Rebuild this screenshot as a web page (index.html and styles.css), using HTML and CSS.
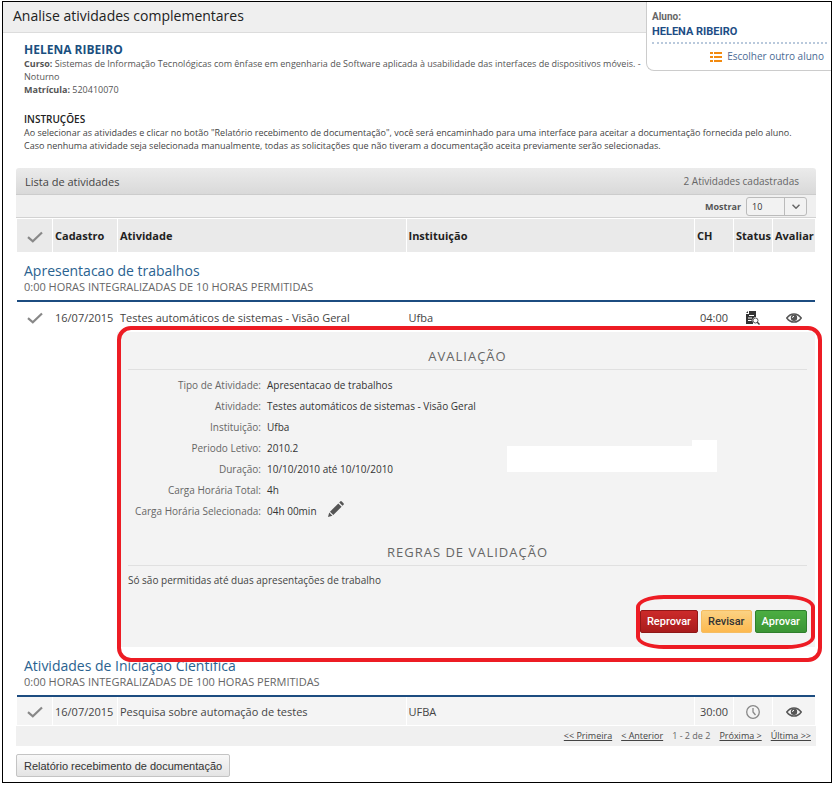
FILE: index.html
```html
<!DOCTYPE html>
<html lang="pt-BR">
<head>
<meta charset="utf-8">
<title>Analise atividades complementares</title>
<link rel="stylesheet" href="styles.css">
</head>
<body>
<svg class="sprite" aria-hidden="true">
  <symbol id="check" viewBox="0 0 16 12"><path d="M1 6.200 5.800 10.300 15 1.500" fill="none" stroke="currentColor" stroke-width="2.200"/></symbol>
  <symbol id="eye" viewBox="0 0 16 10">
    <path d="M.8 5C2.800 2.200 5.200.9 8 .9S13.200 2.200 15.200 5C13.200 7.800 10.800 9.100 8 9.100S2.800 7.800.8 5Z" fill="none" stroke="currentColor" stroke-width="1.500"/>
    <circle cx="8" cy="4.800" r="3.200" fill="currentColor"/>
    <path d="M6.500 4.800A1.500 1.500 0 0 1 8 3.300" fill="none" stroke="#fff"/>
  </symbol>
</svg>
<div class="frame">
  <header class="topbar"><h1>Analise atividades complementares</h1></header>
  <aside class="student">
    <div class="student-label">Aluno:</div>
    <div class="student-name">HELENA RIBEIRO</div>
    <a class="student-switch" href="#">
      <svg width="12" height="10" viewBox="0 0 12 10" fill="#f28a10"><path d="M0 0h3v2H0zM4 0h8v2H4zM0 4h3v2H0zM4 4h8v2H4zM0 8h3v2H0zM4 8h8v2H4z"/></svg>
      Escolher outro aluno</a>
  </aside>

  <main class="content">
    <section class="info">
      <h2>HELENA RIBEIRO</h2>
      <p><b>Curso:</b> Sistemas de Informação Tecnológicas com ênfase em engenharia de Software aplicada à usabilidade das interfaces de dispositivos móveis. - Noturno</p>
      <p><b>Matrícula:</b> 520410070</p>
    </section>
    <section class="instructions">
      <h3>INSTRUÇÕES</h3>
      <p>Ao selecionar as atividades e clicar no botão "Relatório recebimento de documentação", você será encaminhado para uma interface para aceitar a documentação fornecida pelo aluno.</p>
      <p>Caso nenhuma atividade seja selecionada manualmente, todas as solicitações que não tiveram a documentação aceita previamente serão selecionadas.</p>
    </section>

    <section class="list">
      <div class="list-head"><h2>Lista de atividades</h2><span>2 Atividades cadastradas</span></div>
      <div class="list-tools">
        <label for="page-size">Mostrar</label>
        <span class="select">
          <select id="page-size"><option>10</option><option>20</option></select>
          <svg width="8" height="5" viewBox="0 0 8 5"><path d="M.5.7 4 4.200 7.500.7" fill="none" stroke="#666" stroke-width="1.500"/></svg>
        </span>
      </div>
      <table>
        <colgroup><col class="c-check"><col class="c-date"><col><col><col class="c-hours"><col class="c-status"><col class="c-view"></colgroup>
        <thead>
          <tr>
            <th class="mid"><label class="tick"><input type="checkbox" aria-label="Selecionar todas"><svg><use href="#check"/></svg></label></th>
            <th>Cadastro</th><th>Atividade</th><th>Instituição</th><th>CH</th><th>Status</th><th>Avaliar</th>
          </tr>
        </thead>
        <tbody>
          <tr class="group"><td colspan="7"><h3>Apresentacao de trabalhos</h3><p>0:00 HORAS INTEGRALIZADAS DE 10 HORAS PERMITIDAS</p></td></tr>
          <tr class="row">
            <td class="mid"><label class="tick"><input type="checkbox" aria-label="Selecionar Testes automáticos de sistemas"><svg><use href="#check"/></svg></label></td>
            <td>16/07/2015</td><td>Testes automáticos de sistemas - Visão Geral</td><td>Ufba</td><td class="hours">04:00</td>
            <td class="mid"><svg class="doc" viewBox="0 0 14 14"><path fill="#333" fill-rule="evenodd" d="M3 0h7v6a3.500 3.500 0 0 0-3 5.500V13H0V3h3ZM3 4v1h5V4ZM2 6.500v1h4v-1ZM2 9v1h3.500V9ZM0 2 2 0v2Z"/><circle cx="9.500" cy="9.500" r="2.500" fill="#fff" stroke="#555"/><path d="m11.300 11.300 2.200 2.200" stroke="#333" stroke-width="1.300"/></svg></td>
            <td class="mid"><button class="icon" aria-label="Avaliar"><svg class="eye"><use href="#eye"/></svg></button></td>
          </tr>
          <tr class="detail">
            <td colspan="2"></td>
            <td colspan="5">
              <div class="panel">
                <h4>AVALIAÇÃO</h4>
                <dl>
                  <dt>Tipo de Atividade:</dt><dd>Apresentacao de trabalhos</dd>
                  <dt>Atividade:</dt><dd>Testes automáticos de sistemas - Visão Geral</dd>
                  <dt>Instituição:</dt><dd>Ufba</dd>
                  <dt>Periodo Letivo:</dt><dd>2010.2</dd>
                  <dt>Duração:</dt><dd>10/10/2010 até 10/10/2010</dd>
                  <dt>Carga Horária Total:</dt><dd>4h</dd>
                  <dt>Carga Horária Selecionada:</dt><dd>04h 00min <button class="icon edit" aria-label="Editar carga horária"><svg width="16" height="16" viewBox="0 0 16 16" fill="#555"><path d="m0 16 1.200-4.400 3.200 3.200ZM2 10.700 10.300 2.400l3.300 3.300L5.300 14ZM11.200 1.500l1-1q.8-.8 1.600 0l1.700 1.700q.8.8 0 1.600l-1 1Z"/></svg></button></dd>
                </dl>
                <h4>REGRAS DE VALIDAÇÃO</h4>
                <p>Só são permitidas até duas apresentações de trabalho</p>
                <div class="actions">
                  <button class="btn reject">Reprovar</button>
                  <button class="btn revise">Revisar</button>
                  <button class="btn approve">Aprovar</button>
                </div>
                <div class="blank"></div>
                <div class="mark mark-panel"></div>
                <div class="mark mark-actions"></div>
              </div>
            </td>
          </tr>
          <tr class="group"><td colspan="7"><h3>Atividades de Iniciação Científica</h3><p>0:00 HORAS INTEGRALIZADAS DE 100 HORAS PERMITIDAS</p></td></tr>
          <tr class="row shaded">
            <td class="mid"><label class="tick"><input type="checkbox" aria-label="Selecionar Pesquisa sobre automação de testes"><svg><use href="#check"/></svg></label></td>
            <td>16/07/2015</td><td>Pesquisa sobre automação de testes</td><td>UFBA</td><td class="hours">30:00</td>
            <td class="mid"><svg class="doc" viewBox="0 0 14 14" fill="none" stroke="#888" stroke-width="1.300"><circle cx="7" cy="7" r="6.300"/><path d="M7 3v4l2.500 3"/></svg></td>
            <td class="mid"><button class="icon" aria-label="Avaliar"><svg class="eye"><use href="#eye"/></svg></button></td>
          </tr>
        </tbody>
      </table>
      <nav class="pager"><a href="#">&lt;&lt; Primeira</a><a href="#">&lt; Anterior</a><span>1 - 2 de 2</span><a href="#">Próxima &gt;</a><a href="#">Última &gt;&gt;</a></nav>
    </section>
    <button class="report">Relatório recebimento de documentação</button>
  </main>
</div>
</body>
</html>
```

FILE: styles.css
```css
* { box-sizing: border-box; }
body {
  margin: 1px 1px 3px 2px;
  background: #fff;
  color: #444;
  font: 11px/13px "Open Sans", "Noto Sans", sans-serif;
}
h1, h2, h3, h4, p, dl, dd { margin: 0; font-weight: 400; }
svg { display: block; }
button { cursor: pointer; }
.sprite { position: absolute; width: 0; height: 0; }
.frame { position: relative; border: 1px solid #000; }

.topbar {
  height: 31px;
  padding: 0 10px;
  background: #efefef;
  border-bottom: 1px solid #dcdcdc;
}
.topbar h1 { font-size: 14px; line-height: 28px; color: #222; }

.student {
  position: absolute;
  top: 0;
  right: 0;
  width: 185px;
  height: 69px;
  padding: 7px 4px 0 5px;
  background: #fff;
  border: solid #ccc;
  border-width: 0 0 1px 1px;
  border-radius: 0 0 0 8px;
}
.student-label { font: bold 10px/15px Roboto, sans-serif; color: #666; }
.student-name {
  padding-bottom: 2px;
  border-bottom: 2px dotted #b9c9dc;
  font: bold 11px/16px Roboto, sans-serif;
  color: #1d4d85;
}
.student-switch {
  display: flex;
  justify-content: flex-end;
  align-items: center;
  gap: 5px;
  padding: 6px 3px 0 0;
  font-size: 10px;
  color: #4a6a94;
  text-decoration: none;
}

.content { padding: 10px 15px 5px 13px; }
.info, .instructions { padding-left: 8px; }
.info { width: 640px; color: #555; font-size: 9px; }
.info h2 { font-size: 12px; line-height: 14px; font-weight: 700; color: #1a4f80; }
.instructions { padding-top: 17px; font-size: 9px; }
.instructions h3 { font-size: 10px; font-weight: 600; color: #222; }

.list { margin-top: 16px; }
.list-head {
  display: flex;
  justify-content: space-between;
  height: 27px;
  padding: 0 17px 0 9px;
  border-bottom: 1px solid #ccc;
  border-radius: 3px 3px 0 0;
  background: linear-gradient(#ebebeb, #d9d9d9);
  line-height: 27px;
}
.list-head h2 { font-size: 11px; }
.list-head span { font-size: 10px; color: #666; }
.list-tools {
  display: flex;
  justify-content: flex-end;
  align-items: center;
  gap: 5px;
  height: 23px;
  padding-right: 9px;
  background: #f0f0f0;
  border-bottom: 1px solid #d2d2d2;
}
.list-tools label { font-size: 9px; font-weight: 700; color: #555; }
.select { position: relative; width: 61px; height: 19px; }
.select select {
  width: 100%;
  height: 100%;
  padding: 0 5px;
  appearance: none;
  border: 1px solid #bbb;
  border-radius: 3px;
  background: linear-gradient(90deg, #f2f2f2 37px, #bbb 37px 38px, #f2f2f2 38px);
  color: #333;
  font: 9px "Open Sans", sans-serif;
}
.select svg { position: absolute; right: 7px; top: 7px; pointer-events: none; }

table { width: calc(100% - 2px); margin: 1px 1px 0; border-collapse: separate; border-spacing: 0; table-layout: fixed; }
.c-check { width: 35px; }
.c-date { width: 65px; }
.c-hours { width: 39px; }
.c-status { width: 39px; }
.c-view { width: 43px; }
th, td { padding: 0; text-align: left; }
th { height: 33px; padding-left: 2px; background: #eaeaea; color: #222; font-weight: 700; white-space: nowrap; }
th + th, .row td + td { border-left: 1px solid #fff; }
.row td { height: 30px; padding-left: 2px; }
.row.shaded td { height: 29px; background: #f4f4f4; border-bottom: 1px solid #fff; }
.row .hours { padding-left: 5px; }
th.mid, .row .mid { padding: 0; text-align: center; }
.mid svg { display: inline-block; vertical-align: middle; }
.tick { color: #888; cursor: pointer; }
.tick input { position: absolute; opacity: 0; pointer-events: none; }
.tick svg { width: 16px; height: 12px; }
.doc { width: 14px; height: 14px; }
.icon { padding: 0; border: 0; background: none; color: #555; }
.eye { width: 16px; height: 10px; }

.group td { height: 50px; padding: 9px 7px 0; border-bottom: 2px solid #1c4c80; vertical-align: top; }
.group h3 { font-size: 14px; line-height: 19px; color: #2a6290; }
.group p { line-height: 14px; color: #666; }

.panel { position: relative; padding: 15px 8px 14px 11px; background: #f3f3f3; }
.panel h4 {
  padding-bottom: 4px;
  border-bottom: 1px solid #e0e0e0;
  font-size: 13px;
  line-height: 18px;
  letter-spacing: 1px;
  text-align: center;
  color: #666;
}
dl {
  display: grid;
  grid-template-columns: 133px 1fr;
  column-gap: 6px;
  padding: 5px 0 21px;
  font-size: 10px;
  line-height: 21px;
}
dt { text-align: right; white-space: nowrap; color: #666; }
dd { display: flex; gap: 11px; color: #333; }
.edit { height: 16px; }
.panel p { padding-top: 8px; font-size: 10px; }
.actions { display: flex; justify-content: flex-end; gap: 3px; padding-top: 23px; }
.btn {
  height: 23px;
  padding: 0 6px;
  border: 1px solid;
  border-radius: 2px;
  font: 500 11px Roboto, sans-serif;
  color: #fff;
}
.reject { background: linear-gradient(#cc2a2a, #a91c1c); border-color: #8f1717; }
.revise { background: linear-gradient(#fbd283, #fdb94f); border-color: #f5bd62; color: #333; }
.approve { background: linear-gradient(#4cae42, #3b9535); border-color: #2f7f2c; }

.blank { position: absolute; top: 114px; right: 98px; width: 210px; height: 26px; background: #fff; }
.blank::before { content: ""; position: absolute; right: 0; bottom: 100%; width: 25px; height: 6px; background: #fff; }
.mark { position: absolute; border: solid #ed1c24; pointer-events: none; }
.mark-panel { inset: -6px -7px -15px 0; border-width: 4px; border-radius: 14px; z-index: 1; }
.mark-actions { right: 0; bottom: -2px; width: 179px; height: 54px; border-width: 4px; border-radius: 28px / 12px; }

.pager {
  display: flex;
  justify-content: flex-end;
  gap: 9px;
  height: 20px;
  padding-right: 5px;
  background: #f0f0f0;
  font-size: 9px;
  line-height: 19px;
  color: #666;
}
.pager a { color: #444; }
.report {
  display: block;
  height: 23px;
  margin-top: 8px;
  padding: 0 7px;
  border: 1px solid #c4c4c4;
  border-radius: 2px;
  background: linear-gradient(#f8f8f8, #e4e4e4);
  color: #333;
  font: 11px "Liberation Sans", sans-serif;
}
```
